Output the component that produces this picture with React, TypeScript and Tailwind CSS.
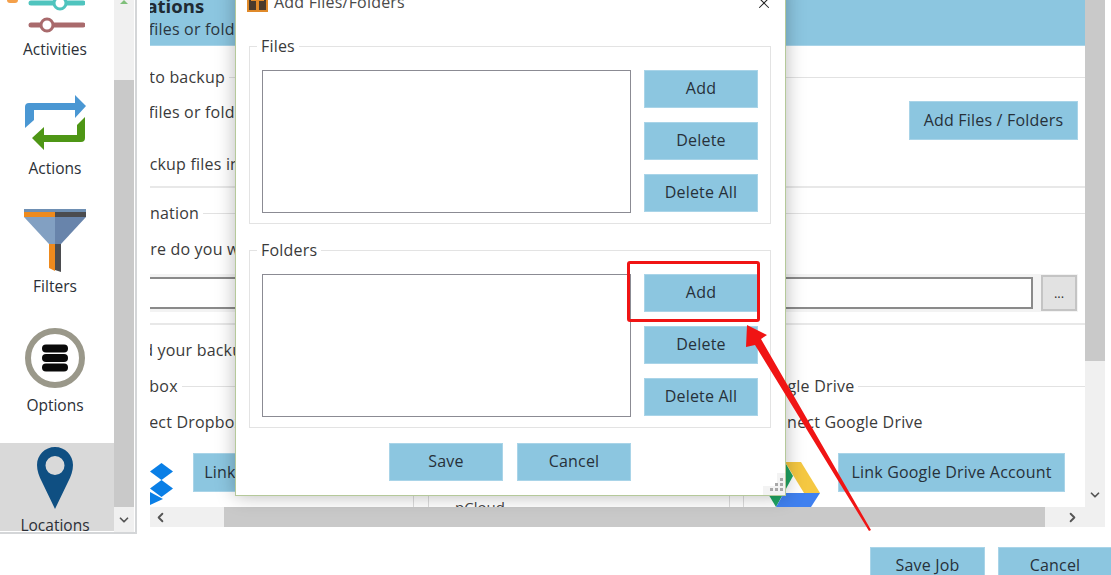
import React from 'react';
import { ChevronDown, ChevronLeft, ChevronRight, X } from 'lucide-react';

const font = 'font-["Open_Sans","Noto_Sans",sans-serif]';

const Btn: React.FC<{ label: string; className: string }> = ({ label, className }) => (
  <button className={`flex shrink-0 items-center justify-center whitespace-nowrap bg-[#8cc6e0] border border-[#a9d4e8] pb-[2px] text-[16px] tracking-[0.2px] text-[#27313a] ${className}`}>
    {label}
  </button>
);

const SideItem: React.FC<{ label: string; icon: React.ReactNode; className?: string }> = ({ label, icon, className = '' }) => (
  <div className={`flex shrink-0 flex-col items-center pr-1 ${className}`}>
    {icon}
    <span className="text-[15.5px] leading-5 text-[#2b2f36]">{label}</span>
  </div>
);

const Legend: React.FC<{ text: string; shift: string }> = ({ text, shift }) => (
  <div className="flex h-[22px] items-center overflow-hidden">
    <span className={`shrink-0 text-[16px] tracking-[0.2px] text-[#3a3a3a] ${shift}`}>{text}</span>
    <div className="ml-1 h-px flex-1 bg-[#e2e2e2]" />
  </div>
);

const Clip: React.FC<{ text: string; shift: string; className?: string }> = ({ text, shift, className = '' }) => (
  <div className={`flex h-[22px] items-center overflow-hidden whitespace-nowrap text-[16px] tracking-[0.2px] text-[#3a3a3a] ${className}`}>
    <span className={shift}>{text}</span>
  </div>
);

const GroupBox: React.FC<{ title: string }> = ({ title }) => (
  <div className="relative flex h-[178px] gap-[13px] border border-[#e3e3e3] pl-3 pt-[23px]">
    <span className="absolute -top-[11px] left-[7px] bg-white px-[4px] text-[16px] leading-5 tracking-[0.2px] text-[#3a3a3a]">{title}</span>
    <div className="h-[143px] w-[369px] border border-[#8b8b93] bg-white" />
    <div className="flex flex-col gap-[14px]">
      <Btn label="Add" className="h-[38px] w-[114px]" />
      <Btn label="Delete" className="h-[38px] w-[114px]" />
      <Btn label="Delete All" className="h-[38px] w-[114px]" />
    </div>
  </div>
);

export default function App() {
  return (
    <div className={`relative h-[575px] w-[1111px] overflow-hidden bg-white ${font}`}>
      <div className="flex items-start">
        {/* left nav */}
        <div className="relative flex h-[534px] w-[137px] border-r-2 border-b-2 border-[#d4d6d8]">
          <div className="absolute left-[7px] top-0 h-[3px] w-[11px] rounded-b-sm bg-[#f4a04a]" />
          <div className="flex h-[532px] w-[114px] flex-col overflow-hidden">
            <SideItem
              label="Activities"
              className="-mt-[3px] h-[68px]"
              icon={
                <svg width="60" height="42" viewBox="0 0 60 42">
                  <path d="M6 6h52" stroke="#4fc4be" strokeWidth="5" strokeLinecap="round" />
                  <circle cx="35" cy="6" r="6" fill="#fff" stroke="#4fc4be" strokeWidth="3" />
                  <path d="M6 28h52" stroke="#a96a6c" strokeWidth="5" strokeLinecap="round" />
                  <circle cx="22" cy="28" r="6" fill="#fff" stroke="#a96a6c" strokeWidth="3" />
                </svg>
              }
            />
            <SideItem
              label="Actions"
              className="mt-[32px] h-[85px]"
              icon={
                <svg width="64" height="56" viewBox="0 0 64 56" className="mb-[7px] -mt-[2px]">
                  <path d="M2 33V12q0-4 4-4h46V0l11 11-11 12v-8H11v10z" fill="#4a97d3" />
                  <path d="M62 22v21q0 4-4 4H21v8L9 43l12-11v8h33V30z" fill="#4e9615" />
                </svg>
              }
            />
            <SideItem
              label="Filters"
              className="mt-[27px] h-[90px]"
              icon={
                <svg width="64" height="64" viewBox="0 0 64 64" className="mb-[3px]">
                  <path d="M1 0h31v8H1z" fill="#ee8a1d" />
                  <path d="M32 0h31v8H32z" fill="#4b4c4f" />
                  <path d="M1 0h62v3H1z" fill="#6e8fb3" />
                  <path d="M1 8h31v27h-6z" fill="#82a0c2" />
                  <path d="M32 8h31L38 35h-6z" fill="#6884ab" />
                  <path d="M26 35h6v27l-6-3z" fill="#ee8a1d" />
                  <path d="M32 35h6v28l-6-2z" fill="#4b4c4f" />
                </svg>
              }
            />
            <SideItem
              label="Options"
              className="mt-[29px] h-[88px]"
              icon={
                <svg width="60" height="60" viewBox="0 0 60 60" className="mb-[7px]">
                  <circle cx="30" cy="30" r="27" fill="#fff" stroke="#9a988a" strokeWidth="6" />
                  <rect x="17" y="16.5" width="26" height="8" rx="4" fill="#0a0a0a" />
                  <rect x="17" y="26" width="26" height="8" rx="4" fill="#0a0a0a" />
                  <rect x="17" y="35.5" width="26" height="8" rx="4" fill="#0a0a0a" />
                </svg>
              }
            />
            <SideItem
              label="Locations"
              className="mt-[27px] h-[88px] bg-[#d9d9d9] pt-[4px]"
              icon={
                <svg width="36" height="62" viewBox="0 0 36 62" className="mb-[6px] shrink-0">
                  <path
                    fillRule="evenodd"
                    d="M18 0C8 0 0 8 0 18c0 6 2 11 5 17l13 27 13-27c3-6 5-11 5-17C36 8 28 0 18 0zm0 9a9.5 9.5 0 1 1 0 19 9.5 9.5 0 0 1 0-19z"
                    fill="#0f4f82"
                  />
                </svg>
              }
            />
          </div>
          <div className="flex h-[532px] w-[20px] flex-col bg-[#f0f0f0]">
            <div className="flex h-[80px] justify-center">
              <svg width="10" height="4" viewBox="0 0 10 4">
                <path d="M5 0l4 4H1z" fill="#7fbf7a" />
              </svg>
            </div>
            <div className="h-[427px] bg-[#c9c9c9]" />
            <div className="flex flex-1 items-center justify-center">
              <ChevronDown size={14} strokeWidth={3} className="text-[#555]" />
            </div>
          </div>
        </div>

        {/* main panel */}
        <div className="ml-[13px] flex h-[527px] w-[955px] flex-col">
          <div className="flex h-[507px]">
            <div className="flex h-[507px] w-[935px] flex-col overflow-hidden">
              <div className="relative h-[46px] shrink-0 overflow-hidden border-b border-[#a9d4e8] bg-[#8cc6e0]">
                <div className="-ml-[35px] -mt-[6px] text-[18.5px] font-bold leading-6 text-[#1f2a33]">Locations</div>
                <div className="-ml-[36px] mt-px text-[16px] leading-5 tracking-[0.2px] text-[#2b3640]">Add files or folders</div>
              </div>

              <div className="mt-5"><Legend text="Files to backup" shift="-ml-[39px]" /></div>
              <div className="flex h-[100px] shrink-0 justify-between border-b-2 border-[#e8e8e8] pr-[7px]">
                <div className="flex flex-col">
                  <Clip text="Add files or folders" shift="-ml-[36px]" className="mt-[13px] w-[86px]" />
                  <Clip text="Backup files in" shift="-ml-[20px]" className="mt-[30px] w-[86px]" />
                </div>
                <Btn label="Add Files / Folders" className="mt-[13px] h-[39px] w-[169px]" />
              </div>

              <div className="mt-[14px]"><Legend text="Destination" shift="-ml-[39px]" /></div>
              <Clip text="Where do you want" shift="-ml-[34px]" className="mt-[14px] shrink-0" />
              <div className="mt-[14px] flex h-[38px] w-[928px] shrink-0 items-center overflow-hidden bg-[#f3f3f3] pr-px">
                <div className="-ml-[2px] h-[32px] flex-1 border-2 border-[#8a8a8a] bg-white" />
                <div className="ml-2 flex h-[36px] w-[36px] items-center justify-center border-2 border-[#c4c4c4] bg-[#e2e2e2] text-[13px] leading-none text-[#333]">...</div>
              </div>
              <div className="mt-[11px] h-[2px] shrink-0 bg-[#e8e8e8]" />

              <Clip text="Send your backup" shift="-ml-[35px]" className="mt-[14px] shrink-0" />

              <div className="mt-[14px] flex h-[132px] shrink-0">
                <div className="flex w-[264px] flex-col border-r border-[#dcdcdc]">
                  <Legend text="Dropbox" shift="-ml-[39px]" />
                  <Clip text="Connect Dropbox" shift="-ml-[41px]" className="mt-[14px]" />
                  <div className="mt-[20px] flex h-[39px]">
                    <svg width="24" height="44" viewBox="0 0 24 44" className="mt-[9px] shrink-0">
                      <path d="M0 30l13 7L0 43z" fill="#0a7fe6" />
                      <path d="M0 27l11 7 10-6" fill="none" stroke="#fff" strokeWidth="2" />
                      <path d="M11.500 1l11.500 8.500-11.500 8.500-11.500-8.500z" fill="#0a7fe6" />
                      <path d="M11.500 18l11.500 8.500-11.500 8.500-11.500-8.500z" fill="#0a7fe6" />
                    </svg>
                    <Btn label="Link Dropbox Account" className="ml-[19px] h-[39px] w-[191px]" />
                  </div>
                </div>
                <div className="ml-[14px] flex w-[302px] flex-col border-x border-[#dcdcdc] pl-[26px]">
                  <div className="mt-[122px] text-[15px] leading-5 text-[#444]">pCloud</div>
                </div>
                <div className="ml-[13px] flex flex-1 flex-col border-l border-[#dcdcdc]">
                  <Legend text="Google Drive" shift="ml-[12px]" />
                  <Clip text="Connect Google Drive" shift="ml-[13px]" className="mt-[14px]" />
                  <div className="mt-[20px] flex h-[39px]">
                    <svg width="54" height="46" viewBox="0 0 54 46" className="ml-[23px] mt-[9px] shrink-0">
                      <path d="M18 0l8 14L9 45 0 30z" fill="#1fa463" />
                      <path d="M18 0h16l19 31H37z" fill="#f5c842" />
                      <path d="M17 31h36l-9 14H9z" fill="#3f80ef" />
                    </svg>
                    <Btn label="Link Google Drive Account" className="ml-[17px] h-[39px] w-[227px]" />
                  </div>
                </div>
              </div>
            </div>

            <div className="flex h-[507px] w-[20px] flex-col bg-[#f0f0f0]">
              <div className="h-[361px] bg-[#c9c9c9]" />
              <div className="flex flex-1 items-end justify-center pb-[5px]">
                <ChevronDown size={14} strokeWidth={3} className="text-[#555]" />
              </div>
            </div>
          </div>
          <div className="flex h-[20px] bg-[#f0f0f0]">
            <div className="flex w-[74px] items-center pl-[3px]">
              <ChevronLeft size={15} strokeWidth={3} className="text-[#555]" />
            </div>
            <div className="w-[821px] bg-[#c9c9c9]" />
            <div className="flex flex-1 items-center pl-[20px]">
              <ChevronRight size={15} strokeWidth={3} className="text-[#555]" />
            </div>
          </div>
        </div>
      </div>

      {/* bottom buttons */}
      <div className="ml-[870px] mt-[13px] flex gap-[13px]">
        <Btn label="Save Job" className="h-[38px] w-[115px]" />
        <Btn label="Cancel" className="h-[38px] w-[114px]" />
      </div>

      {/* modal window */}
      <div className="absolute -top-[16px] left-[235px] h-[512px] w-[551px] border border-[#b5c99a] bg-white shadow-[0_0_18px_rgba(0,0,0,0.28)]">
        <div className="flex h-[38px] items-center pl-[11px] pr-3">
          <svg width="21" height="20" viewBox="0 0 21 20" className="-mt-[4px]">
            <rect width="21" height="20" fill="#4a3a2c" />
            <path d="M0 18h21v2H0zM0 0h2v20H0zM19 0h2v20h-2zM4 6h13v3h-5v9H9V9H4z" fill="#e08a2a" />
          </svg>
          <span className="ml-[6px] -mt-[4px] text-[16px] tracking-[0.2px] text-[#4a4a4a]">Add Files/Folders</span>
          <X size={18} strokeWidth={1.4} className="ml-auto -mt-[3px] text-[#222]" />
        </div>
        <div className="ml-[13px] mr-[14px] mt-[23px] flex flex-col gap-[26px]">
          <GroupBox title="Files" />
          <GroupBox title="Folders" />
        </div>
        <div className="ml-[153px] mt-[15px] flex gap-[14px]">
          <Btn label="Save" className="h-[38px] w-[114px]" />
          <Btn label="Cancel" className="h-[38px] w-[114px]" />
        </div>
        <div className="absolute bottom-0 right-0 h-[22px] w-[22px]">
          <svg width="22" height="22" viewBox="0 0 22 22">
            <path d="M0 13h16v9H0zM14 0h8v22h-8z" fill="#f3f3f3" />
            <path d="M17 5h3v3h-3zM17 10h3v3h-3zM12 10h3v3h-3zM17 15h3v3h-3zM12 15h3v3h-3zM7 15h3v3H7z" fill="#a8a8a8" />
          </svg>
        </div>
      </div>

      {/* red annotation */}
      <div className="absolute left-[627px] top-[261px] h-[61px] w-[133px] rounded-[3px] border-[3px] border-[#f01414]" />
      <svg width="140" height="225" viewBox="0 0 140 225" className="absolute left-[740px] top-[315px]">
        <path d="M7 10l20 10-6 4 110 191-2 1L15 30 6 32z" fill="#f01414" />
      </svg>
    </div>
  );
}
